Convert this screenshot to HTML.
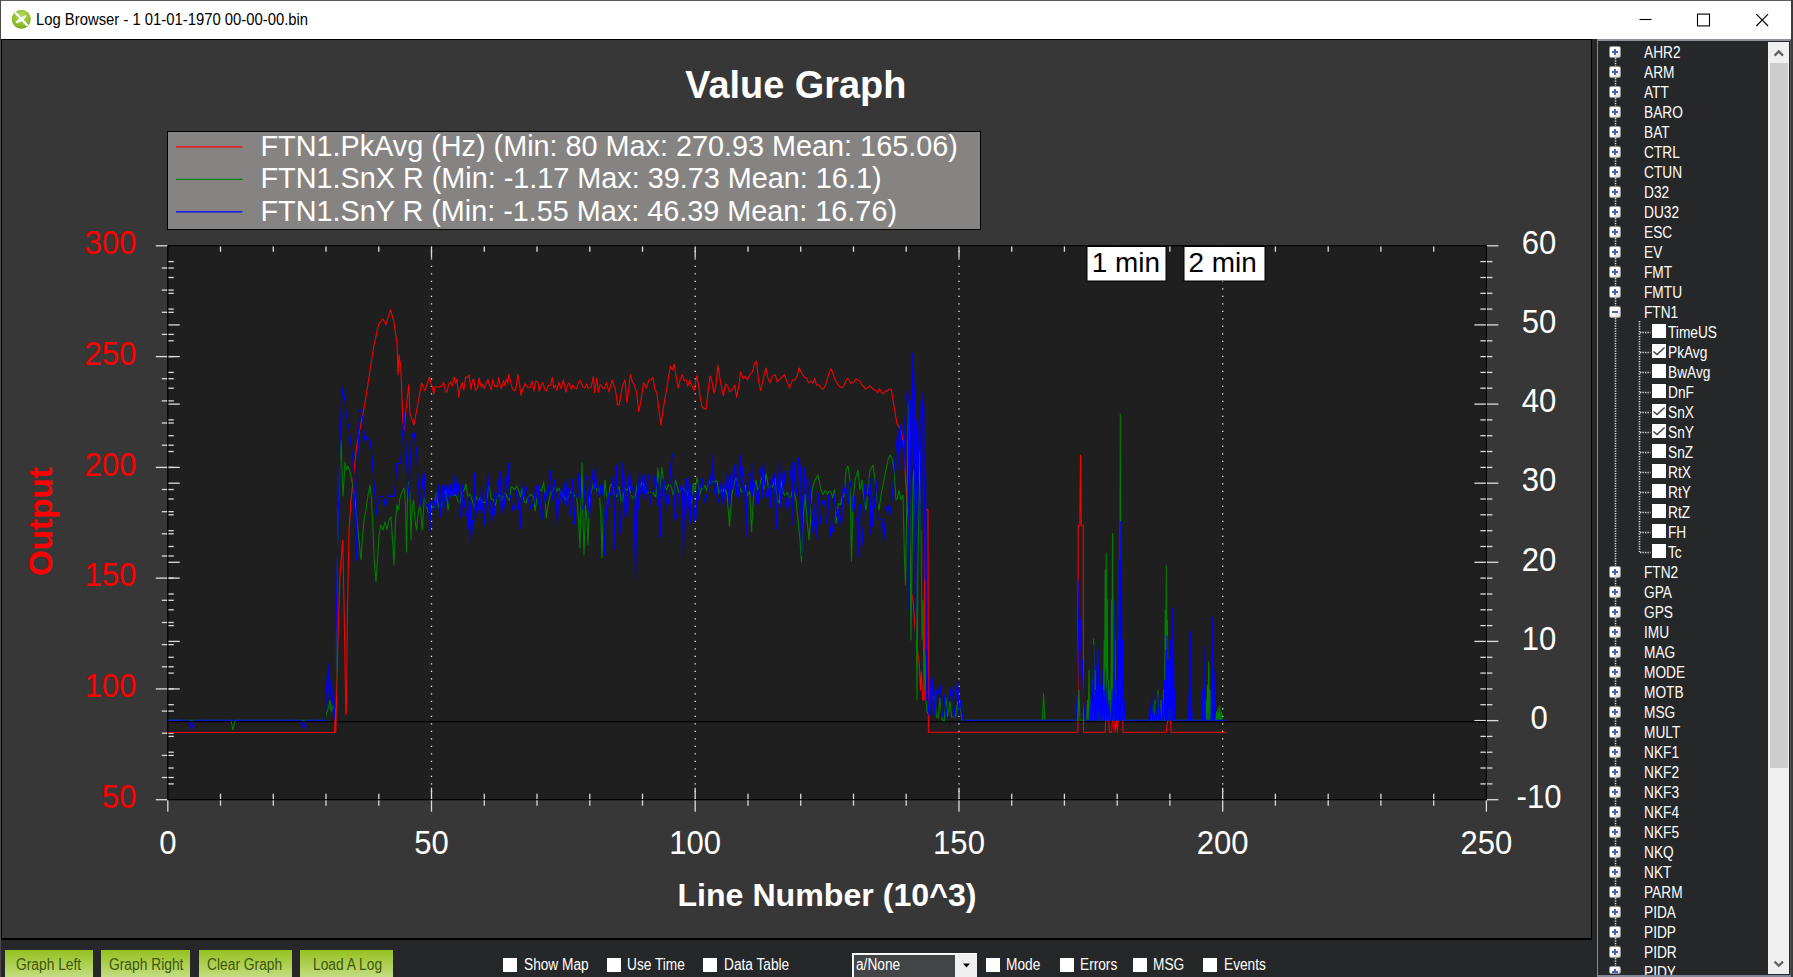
<!DOCTYPE html><html><head><meta charset="utf-8"><title>Log Browser</title><style>
html,body{margin:0;padding:0}
body{width:1793px;height:977px;overflow:hidden;background:#262728;position:relative;font-family:"Liberation Sans",Arial,sans-serif;}
.abs{position:absolute}
#titlebar{left:1px;top:1px;width:1790px;height:38px;background:#fff}
#title{left:36.3px;top:10.3px;font-size:16px;color:#000;white-space:pre;line-height:20px;transform:scaleX(.927);transform-origin:0 50%}
#frameTop{left:0;top:0;width:1793px;height:1px;background:#5a5a5a}
#frameL{left:0;top:0;width:1px;height:977px;background:#4a4a4a}
#frameR{left:1791px;top:0;width:2px;height:977px;background:#3c3c3c}
#paneBorder{left:1px;top:39px;width:1591px;height:900.5px;background:#000}
.ui{font-size:15.6px;white-space:pre;transform:scaleX(.878);transform-origin:0 50%;line-height:18px}
.btn{top:949.5px;height:30px;background:linear-gradient(#94c11f,#cde296 110%);color:#405704}
.btn span{position:absolute;top:6.4px;}
.cb{width:14px;height:14px;background:#fff}
.lbl{color:#fff}
#tree{left:1597px;top:39px;width:194px;height:937px;box-sizing:border-box;border:1px solid #828790;border-top:2px solid #8d9096;border-right-color:#555;background:#262728;overflow:hidden}
.pm{overflow:hidden;position:absolute;left:1609px;width:12px;height:12px;box-sizing:border-box;border:1px solid #959595;border-radius:2px;background:linear-gradient(135deg,#fff 40%,#d8d8d8)}
.pm i{position:absolute;left:2px;top:4px;width:6px;height:2px;background:#4b63a7}
.pm b{position:absolute;left:4px;top:2px;width:2px;height:6px;background:#4b63a7}
.tl{color:#fff}
</style></head><body>
<div class="abs" id="frameTop"></div><div class="abs" id="frameL"></div><div class="abs" id="frameR"></div>
<div class="abs" id="titlebar"></div>
<svg class="abs" style="left:11px;top:9px" width="21" height="21" viewBox="0 0 21 21"><defs><radialGradient id="ig" cx="50%" cy="30%" r="70%"><stop offset="0" stop-color="#b4d65c"/><stop offset=".75" stop-color="#8dbb2a"/><stop offset="1" stop-color="#78a51c"/></radialGradient></defs><circle cx="10.3" cy="10.2" r="9.5" fill="url(#ig)"/><path d="M14.9 5.9L15.5 7.4L11.6 11.9L5.7 14.6L4.3 13.1L9.1 8.7Z" fill="#fff" opacity=".88"/><path d="M4.7 4.1L16 15.9" stroke="#fff" stroke-width="2.2" stroke-linecap="round" fill="none"/><path d="M15.2 12.6L12.6 15.3" stroke="#fff" stroke-width="1.2" opacity=".8" fill="none"/></svg>
<div class="abs" id="title">Log Browser - 1 01-01-1970 00-00-00.bin</div>
<svg class="abs" style="left:1630px;top:1px" width="160" height="38" viewBox="1630 1 160 38"><g stroke="#000" stroke-width="1.1" fill="none"><path d="M1639.5 19.5H1651.5"/><rect x="1697.5" y="14.1" width="12" height="11.8"/><path d="M1756.3 14.2L1768.1 26M1768.1 14.2L1756.3 26"/></g></svg>
<div class="abs" id="paneBorder"></div>
<svg id="zg" width="1589" height="898" viewBox="2 40 1589 898" style="position:absolute;left:2px;top:40px">
<rect x="2" y="40" width="1589" height="898" fill="#373738"/>
<rect x="167.8" y="245.8" width="1318.6" height="553.9" fill="#1f1f20"/>
<g stroke="#f0f0f0" stroke-width="1.3" stroke-dasharray="1.25 6.25" stroke-dashoffset="-0.1" fill="none"><line x1="431.5" y1="799.7" x2="431.5" y2="245.8"/><line x1="695.2" y1="799.7" x2="695.2" y2="245.8"/><line x1="959.0" y1="799.7" x2="959.0" y2="245.8"/><line x1="1222.7" y1="799.7" x2="1222.7" y2="245.8"/></g>
<g stroke="#dcdcdc" stroke-width="1.3"><line x1="167.8" y1="799.7" x2="167.8" y2="811.7"/><line x1="220.5" y1="793.7" x2="220.5" y2="805.7"/><line x1="220.5" y1="245.8" x2="220.5" y2="251.8"/><line x1="273.3" y1="793.7" x2="273.3" y2="805.7"/><line x1="273.3" y1="245.8" x2="273.3" y2="251.8"/><line x1="326.0" y1="793.7" x2="326.0" y2="805.7"/><line x1="326.0" y1="245.8" x2="326.0" y2="251.8"/><line x1="378.8" y1="793.7" x2="378.8" y2="805.7"/><line x1="378.8" y1="245.8" x2="378.8" y2="251.8"/><line x1="431.5" y1="787.7" x2="431.5" y2="811.7"/><line x1="431.5" y1="245.8" x2="431.5" y2="257.8"/><line x1="484.3" y1="793.7" x2="484.3" y2="805.7"/><line x1="484.3" y1="245.8" x2="484.3" y2="251.8"/><line x1="537.0" y1="793.7" x2="537.0" y2="805.7"/><line x1="537.0" y1="245.8" x2="537.0" y2="251.8"/><line x1="589.8" y1="793.7" x2="589.8" y2="805.7"/><line x1="589.8" y1="245.8" x2="589.8" y2="251.8"/><line x1="642.5" y1="793.7" x2="642.5" y2="805.7"/><line x1="642.5" y1="245.8" x2="642.5" y2="251.8"/><line x1="695.2" y1="787.7" x2="695.2" y2="811.7"/><line x1="695.2" y1="245.8" x2="695.2" y2="257.8"/><line x1="748.0" y1="793.7" x2="748.0" y2="805.7"/><line x1="748.0" y1="245.8" x2="748.0" y2="251.8"/><line x1="800.7" y1="793.7" x2="800.7" y2="805.7"/><line x1="800.7" y1="245.8" x2="800.7" y2="251.8"/><line x1="853.5" y1="793.7" x2="853.5" y2="805.7"/><line x1="853.5" y1="245.8" x2="853.5" y2="251.8"/><line x1="906.2" y1="793.7" x2="906.2" y2="805.7"/><line x1="906.2" y1="245.8" x2="906.2" y2="251.8"/><line x1="959.0" y1="787.7" x2="959.0" y2="811.7"/><line x1="959.0" y1="245.8" x2="959.0" y2="257.8"/><line x1="1011.7" y1="793.7" x2="1011.7" y2="805.7"/><line x1="1011.7" y1="245.8" x2="1011.7" y2="251.8"/><line x1="1064.4" y1="793.7" x2="1064.4" y2="805.7"/><line x1="1064.4" y1="245.8" x2="1064.4" y2="251.8"/><line x1="1117.2" y1="793.7" x2="1117.2" y2="805.7"/><line x1="1117.2" y1="245.8" x2="1117.2" y2="251.8"/><line x1="1169.9" y1="793.7" x2="1169.9" y2="805.7"/><line x1="1169.9" y1="245.8" x2="1169.9" y2="251.8"/><line x1="1222.7" y1="787.7" x2="1222.7" y2="811.7"/><line x1="1222.7" y1="245.8" x2="1222.7" y2="257.8"/><line x1="1275.4" y1="793.7" x2="1275.4" y2="805.7"/><line x1="1275.4" y1="245.8" x2="1275.4" y2="251.8"/><line x1="1328.2" y1="793.7" x2="1328.2" y2="805.7"/><line x1="1328.2" y1="245.8" x2="1328.2" y2="251.8"/><line x1="1380.9" y1="793.7" x2="1380.9" y2="805.7"/><line x1="1380.9" y1="245.8" x2="1380.9" y2="251.8"/><line x1="1433.7" y1="793.7" x2="1433.7" y2="805.7"/><line x1="1433.7" y1="245.8" x2="1433.7" y2="251.8"/><line x1="1486.4" y1="799.7" x2="1486.4" y2="811.7"/><line x1="155.8" y1="799.7" x2="167.8" y2="799.7"/><line x1="161.8" y1="777.5" x2="173.8" y2="777.5"/><line x1="161.8" y1="755.4" x2="173.8" y2="755.4"/><line x1="161.8" y1="733.2" x2="173.8" y2="733.2"/><line x1="161.8" y1="711.1" x2="173.8" y2="711.1"/><line x1="155.8" y1="688.9" x2="179.8" y2="688.9"/><line x1="161.8" y1="666.8" x2="173.8" y2="666.8"/><line x1="161.8" y1="644.6" x2="173.8" y2="644.6"/><line x1="161.8" y1="622.5" x2="173.8" y2="622.5"/><line x1="161.8" y1="600.3" x2="173.8" y2="600.3"/><line x1="155.8" y1="578.1" x2="179.8" y2="578.1"/><line x1="161.8" y1="556.0" x2="173.8" y2="556.0"/><line x1="161.8" y1="533.8" x2="173.8" y2="533.8"/><line x1="161.8" y1="511.7" x2="173.8" y2="511.7"/><line x1="161.8" y1="489.5" x2="173.8" y2="489.5"/><line x1="155.8" y1="467.4" x2="179.8" y2="467.4"/><line x1="161.8" y1="445.2" x2="173.8" y2="445.2"/><line x1="161.8" y1="423.0" x2="173.8" y2="423.0"/><line x1="161.8" y1="400.9" x2="173.8" y2="400.9"/><line x1="161.8" y1="378.7" x2="173.8" y2="378.7"/><line x1="155.8" y1="356.6" x2="179.8" y2="356.6"/><line x1="161.8" y1="334.4" x2="173.8" y2="334.4"/><line x1="161.8" y1="312.3" x2="173.8" y2="312.3"/><line x1="161.8" y1="290.1" x2="173.8" y2="290.1"/><line x1="161.8" y1="268.0" x2="173.8" y2="268.0"/><line x1="155.8" y1="245.8" x2="167.8" y2="245.8"/><line x1="1486.4" y1="799.7" x2="1498.4" y2="799.7"/><line x1="1480.4" y1="783.9" x2="1492.4" y2="783.9"/><line x1="167.8" y1="783.9" x2="173.8" y2="783.9"/><line x1="1480.4" y1="768.0" x2="1492.4" y2="768.0"/><line x1="167.8" y1="768.0" x2="173.8" y2="768.0"/><line x1="1480.4" y1="752.2" x2="1492.4" y2="752.2"/><line x1="167.8" y1="752.2" x2="173.8" y2="752.2"/><line x1="1480.4" y1="736.4" x2="1492.4" y2="736.4"/><line x1="167.8" y1="736.4" x2="173.8" y2="736.4"/><line x1="1474.4" y1="720.6" x2="1498.4" y2="720.6"/><line x1="167.8" y1="720.6" x2="179.8" y2="720.6"/><line x1="1480.4" y1="704.7" x2="1492.4" y2="704.7"/><line x1="167.8" y1="704.7" x2="173.8" y2="704.7"/><line x1="1480.4" y1="688.9" x2="1492.4" y2="688.9"/><line x1="167.8" y1="688.9" x2="173.8" y2="688.9"/><line x1="1480.4" y1="673.1" x2="1492.4" y2="673.1"/><line x1="167.8" y1="673.1" x2="173.8" y2="673.1"/><line x1="1480.4" y1="657.3" x2="1492.4" y2="657.3"/><line x1="167.8" y1="657.3" x2="173.8" y2="657.3"/><line x1="1474.4" y1="641.4" x2="1498.4" y2="641.4"/><line x1="167.8" y1="641.4" x2="179.8" y2="641.4"/><line x1="1480.4" y1="625.6" x2="1492.4" y2="625.6"/><line x1="167.8" y1="625.6" x2="173.8" y2="625.6"/><line x1="1480.4" y1="609.8" x2="1492.4" y2="609.8"/><line x1="167.8" y1="609.8" x2="173.8" y2="609.8"/><line x1="1480.4" y1="594.0" x2="1492.4" y2="594.0"/><line x1="167.8" y1="594.0" x2="173.8" y2="594.0"/><line x1="1480.4" y1="578.1" x2="1492.4" y2="578.1"/><line x1="167.8" y1="578.1" x2="173.8" y2="578.1"/><line x1="1474.4" y1="562.3" x2="1498.4" y2="562.3"/><line x1="167.8" y1="562.3" x2="179.8" y2="562.3"/><line x1="1480.4" y1="546.5" x2="1492.4" y2="546.5"/><line x1="167.8" y1="546.5" x2="173.8" y2="546.5"/><line x1="1480.4" y1="530.7" x2="1492.4" y2="530.7"/><line x1="167.8" y1="530.7" x2="173.8" y2="530.7"/><line x1="1480.4" y1="514.8" x2="1492.4" y2="514.8"/><line x1="167.8" y1="514.8" x2="173.8" y2="514.8"/><line x1="1480.4" y1="499.0" x2="1492.4" y2="499.0"/><line x1="167.8" y1="499.0" x2="173.8" y2="499.0"/><line x1="1474.4" y1="483.2" x2="1498.4" y2="483.2"/><line x1="167.8" y1="483.2" x2="179.8" y2="483.2"/><line x1="1480.4" y1="467.4" x2="1492.4" y2="467.4"/><line x1="167.8" y1="467.4" x2="173.8" y2="467.4"/><line x1="1480.4" y1="451.5" x2="1492.4" y2="451.5"/><line x1="167.8" y1="451.5" x2="173.8" y2="451.5"/><line x1="1480.4" y1="435.7" x2="1492.4" y2="435.7"/><line x1="167.8" y1="435.7" x2="173.8" y2="435.7"/><line x1="1480.4" y1="419.9" x2="1492.4" y2="419.9"/><line x1="167.8" y1="419.9" x2="173.8" y2="419.9"/><line x1="1474.4" y1="404.1" x2="1498.4" y2="404.1"/><line x1="167.8" y1="404.1" x2="179.8" y2="404.1"/><line x1="1480.4" y1="388.2" x2="1492.4" y2="388.2"/><line x1="167.8" y1="388.2" x2="173.8" y2="388.2"/><line x1="1480.4" y1="372.4" x2="1492.4" y2="372.4"/><line x1="167.8" y1="372.4" x2="173.8" y2="372.4"/><line x1="1480.4" y1="356.6" x2="1492.4" y2="356.6"/><line x1="167.8" y1="356.6" x2="173.8" y2="356.6"/><line x1="1480.4" y1="340.8" x2="1492.4" y2="340.8"/><line x1="167.8" y1="340.8" x2="173.8" y2="340.8"/><line x1="1474.4" y1="324.9" x2="1498.4" y2="324.9"/><line x1="167.8" y1="324.9" x2="179.8" y2="324.9"/><line x1="1480.4" y1="309.1" x2="1492.4" y2="309.1"/><line x1="167.8" y1="309.1" x2="173.8" y2="309.1"/><line x1="1480.4" y1="293.3" x2="1492.4" y2="293.3"/><line x1="167.8" y1="293.3" x2="173.8" y2="293.3"/><line x1="1480.4" y1="277.5" x2="1492.4" y2="277.5"/><line x1="167.8" y1="277.5" x2="173.8" y2="277.5"/><line x1="1480.4" y1="261.6" x2="1492.4" y2="261.6"/><line x1="167.8" y1="261.6" x2="173.8" y2="261.6"/><line x1="1486.4" y1="245.8" x2="1498.4" y2="245.8"/></g>
<rect x="167.8" y="245.8" width="1318.6" height="553.9" fill="none" stroke="#000" stroke-width="1.2"/>
<line x1="167.8" y1="721.6" x2="1486.4" y2="721.6" stroke="#000" stroke-width="1.2"/>
<clipPath id="cp"><rect x="167.8" y="245.8" width="1318.6" height="553.9"/></clipPath>
<g clip-path="url(#cp)">
<polyline points="167.8,732.5 334.6,732.5 335.2,708.0 335.8,732.5 337.0,680.0 338.5,620.0 340.0,575.0 342.6,540.0 344.0,600.0 345.8,714.0 346.3,714.0 347.5,610.0 349.0,530.0 351.0,500.0 356.5,447.0 365.0,403.0 373.7,346.5 378.6,324.4 382.8,319.0 386.0,324.4 390.4,309.6 394.0,322.0 397.0,344.0 398.0,374.7 399.0,355.0 400.7,366.0 403.0,422.6 404.4,430.0 406.0,410.0 408.8,384.5 409.8,412.8 414.0,425.0 421.6,383.0 425.0,390.7 429.4,377.0 431.0,384.0 432.3,387.0 433.8,393.9 435.1,386.7 437.1,387.0 439.3,387.0 440.9,386.2 442.4,384.8 443.7,382.4 445.5,391.9 447.0,391.7 448.7,384.6 450.5,381.8 452.4,386.0 454.1,376.9 455.6,383.7 456.9,379.1 458.6,396.9 460.4,387.5 462.2,382.6 463.8,390.2 465.7,376.9 467.6,377.4 469.1,374.9 471.0,389.4 472.3,380.9 473.7,378.7 475.4,390.1 477.5,388.4 479.1,377.8 481.2,387.2 482.6,384.4 484.3,388.6 486.0,383.3 487.9,379.5 489.2,384.5 491.2,390.0 492.8,379.9 494.6,386.4 496.0,385.6 497.2,387.3 498.8,377.3 500.1,384.9 501.4,388.7 503.6,380.5 504.9,386.0 506.4,379.0 507.7,382.9 508.9,374.1 510.8,383.1 512.4,388.4 514.4,391.0 515.8,389.4 517.8,374.3 519.8,385.7 521.0,395.3 522.9,389.2 525.1,383.8 526.6,385.5 528.0,387.8 530.1,387.5 532.1,381.1 534.0,390.9 535.7,381.2 537.7,381.4 539.3,391.2 541.4,384.6 542.8,382.6 544.8,389.5 546.6,390.9 548.4,385.5 550.3,385.5 552.4,377.6 553.8,388.3 555.3,385.3 556.9,390.3 559.0,382.3 561.1,388.5 563.3,380.1 564.5,384.9 565.8,392.2 567.5,385.2 569.3,382.8 571.3,389.3 573.0,385.0 574.7,388.2 576.7,388.7 578.4,382.7 580.3,380.3 582.5,386.5 584.5,387.9 586.7,383.9 588.0,388.1 589.5,388.0 591.3,386.8 593.3,376.7 594.6,392.8 596.7,378.0 598.4,392.5 600.1,384.5 601.6,386.2 602.8,388.3 604.4,388.6 606.3,382.6 609.0,391.9 612.2,379.9 613.9,385.5 615.6,390.6 617.4,404.6 619.1,405.2 622.3,386.6 625.0,379.9 626.8,402.5 628.5,391.4 630.3,374.6 632.3,381.5 634.3,385.2 636.5,392.1 638.8,411.9 641.2,398.8 643.6,382.6 646.2,387.9 648.9,379.9 650.9,379.8 652.9,377.3 654.9,389.5 656.9,393.2 658.9,410.3 660.9,425.2 662.9,411.7 664.9,398.6 666.9,387.9 668.9,374.6 670.6,366.2 672.4,370.1 674.2,364.0 676.2,376.7 678.2,387.9 680.2,379.5 682.2,374.6 684.2,380.6 686.2,379.9 687.9,386.2 689.7,380.0 691.5,385.2 694.2,390.6 696.7,375.9 698.4,384.5 700.2,397.1 702.0,406.5 704.0,408.3 706.0,409.2 708.0,391.6 710.0,375.9 712.0,382.1 714.0,393.2 716.0,384.6 717.9,365.3 720.6,382.6 723.3,395.9 725.4,383.9 727.3,385.2 729.9,391.9 732.6,389.2 734.7,385.2 736.6,397.2 738.6,387.2 740.6,371.9 743.2,378.6 745.2,376.3 747.2,379.9 749.9,374.6 752.5,371.9 754.5,363.3 756.5,361.3 758.5,380.2 760.5,390.6 763.2,379.9 765.9,367.9 767.9,377.7 769.9,382.6 772.5,375.9 775.2,374.6 777.2,381.8 779.2,379.9 781.8,377.3 784.5,374.6 787.2,382.6 789.8,387.9 792.5,379.9 795.1,379.9 797.1,376.0 799.1,367.9 801.8,373.3 804.5,377.3 806.4,377.7 808.4,382.6 811.1,381.3 812.9,383.2 814.7,378.5 816.4,385.2 818.6,384.7 820.9,387.8 823.1,389.2 825.1,385.9 827.1,379.9 829.1,372.5 831.1,368.7 833.1,374.0 835.1,379.9 837.3,383.7 839.5,386.2 841.7,387.9 843.5,386.4 845.3,382.2 847.0,378.6 848.8,379.1 850.6,383.2 852.4,382.6 854.1,381.8 855.9,378.7 857.7,379.9 859.7,380.7 861.7,384.6 863.7,386.6 865.7,389.2 867.7,387.9 869.7,385.8 871.7,387.4 873.7,389.5 875.7,390.4 877.6,392.4 879.6,388.8 881.6,392.6 883.6,393.7 885.6,390.6 887.4,391.2 889.2,389.2 891.0,389.2 891.3,389.7 896.9,423.5 900.7,429.0 902.5,438.0 903.6,442.6 905.2,474.0 907.0,503.0 909.0,530.0 910.5,559.0 910.8,590.0 913.0,600.0 915.0,628.0 917.5,651.0 919.3,664.5 920.5,690.0 921.3,672.0 922.8,700.0 924.3,700.0 924.6,509.6 928.0,509.6 928.4,732.3 1077.9,732.3 1078.2,525.3 1079.8,525.3 1080.5,455.3 1081.2,525.3 1083.2,525.3 1083.5,732.3 1105.3,732.3 1105.6,720.6 1108.8,720.6 1109.2,732.3 1111.8,732.3 1112.3,720.6 1114.0,720.6 1115.0,732.3 1116.3,720.6 1117.5,732.3 1118.0,720.6 1119.8,720.6 1120.3,617.0 1121.0,617.0 1121.4,700.0 1122.7,700.0 1123.0,732.3 1166.3,732.3 1167.5,720.6 1170.5,720.6 1171.0,732.3 1226.4,732.3" fill="none" stroke="#ff0000" stroke-width="1.05" stroke-linejoin="round"/>
<polyline points="167.8,720.3 231.0,720.3 233.0,730.0 235.0,720.3 325.0,720.3 327.0,712.0 329.0,706.0 330.0,700.0 331.0,712.0 332.5,705.0 334.0,716.0 335.5,700.0 336.8,600.0 338.0,520.0 339.5,470.0 341.0,440.0 342.0,470.0 343.0,496.0 344.0,480.0 345.0,462.0 346.5,470.0 348.0,466.0 350.0,472.0 352.0,482.0 355.0,499.0 357.0,520.0 359.0,540.0 361.0,560.0 362.0,545.0 364.0,520.0 366.0,510.0 368.0,495.0 370.0,485.0 371.5,500.0 373.0,530.0 374.5,565.0 376.0,582.0 377.5,560.0 379.0,535.0 381.0,525.0 383.0,530.0 385.0,522.0 387.0,530.0 389.0,520.0 391.0,517.0 392.5,540.0 394.0,565.0 395.5,520.0 397.0,505.0 398.5,510.0 400.0,498.0 402.0,492.0 404.0,488.0 405.5,505.0 406.5,552.0 407.5,500.0 408.5,481.5 410.0,495.0 411.0,540.0 412.0,510.0 413.5,500.0 415.0,520.0 416.5,530.0 418.0,515.0 420.0,504.0 422.3,530.2 424.3,497.8 426.1,503.2 427.7,511.9 429.8,513.0 431.9,506.4 434.1,507.7 436.3,492.3 438.5,507.0 440.5,507.6 442.6,502.0 444.3,500.0 445.9,490.5 448.1,510.1 449.6,497.8 451.8,493.4 454.2,495.4 456.2,494.9 457.9,500.9 460.0,503.7 461.7,491.8 464.0,490.3 465.9,483.8 467.8,496.2 470.1,494.4 472.0,499.7 474.3,507.9 475.9,496.7 478.3,501.0 480.5,497.1 482.5,502.8 484.0,502.5 486.5,501.9 488.8,485.1 491.2,499.2 493.4,499.6 495.4,505.4 497.4,496.8 499.9,495.1 501.5,500.5 503.9,493.3 506.0,494.1 507.6,498.2 509.4,500.5 511.0,486.8 513.0,487.7 514.7,489.8 516.9,485.9 518.7,490.6 520.6,497.0 522.1,488.7 524.1,501.3 525.9,503.0 527.6,498.4 529.9,494.4 531.9,495.1 533.5,497.1 535.1,510.8 537.0,498.6 539.3,488.8 541.6,490.9 543.8,482.1 546.3,517.8 548.3,503.7 550.8,492.9 553.2,490.3 555.1,485.3 556.8,491.2 558.9,488.1 561.3,494.0 563.2,495.5 565.3,498.9 566.9,500.5 569.2,494.0 570.9,492.1 573.0,492.9 577.0,500.0 578.5,520.0 580.0,548.0 581.0,500.0 582.0,463.0 583.0,520.0 584.0,555.0 585.5,505.0 587.0,520.0 588.0,545.0 589.5,500.0 591.0,493.2 593.0,485.1 595.2,484.1 597.1,491.6 599.2,489.0 601.0,520.0 602.0,558.0 603.5,500.0 605.0,480.0 606.0,491.1 608.1,504.3 610.0,485.6 612.5,483.8 614.2,494.6 616.7,496.8 619.1,486.6 621.4,503.3 623.0,496.3 625.0,489.2 627.2,489.9 629.0,487.3 631.3,495.1 633.5,498.8 635.6,494.9 637.3,484.0 639.4,487.4 641.9,482.6 643.6,483.3 645.2,490.3 647.5,492.8 649.8,492.5 651.6,491.8 653.5,493.6 655.9,496.6 657.8,468.1 659.8,490.5 661.8,467.2 664.1,484.5 666.5,489.5 669.0,484.2 671.4,487.2 673.2,495.2 675.5,480.1 677.2,486.0 678.9,493.3 680.5,490.3 682.4,487.7 684.7,489.9 686.5,491.6 688.0,495.6 689.8,498.4 691.6,502.7 693.2,483.5 694.9,490.8 697.1,477.3 699.6,495.2 701.3,488.5 703.1,489.6 705.1,485.6 706.9,490.9 708.5,481.1 710.8,484.0 712.9,480.7 714.5,482.1 716.9,480.7 718.9,493.7 720.9,490.1 722.6,491.6 724.9,488.3 727.1,495.0 729.5,526.2 731.7,495.6 733.6,485.9 735.9,477.7 738.0,484.1 740.3,488.9 741.8,492.2 743.6,490.8 745.2,485.4 747.5,495.5 749.7,491.2 751.6,531.9 753.8,491.4 756.0,480.3 757.6,490.3 759.8,484.0 762.0,476.5 763.8,488.9 766.2,473.9 768.5,487.9 770.6,485.4 772.5,487.0 775.0,478.9 777.3,499.8 779.3,503.3 781.1,481.2 783.0,492.3 785.2,495.6 786.9,492.0 789.4,498.2 791.1,495.8 793.0,489.2 796.0,500.0 798.0,520.0 800.0,540.0 801.5,562.0 803.0,520.0 805.0,495.0 807.0,520.0 809.0,540.0 810.5,520.0 812.0,490.0 815.0,480.0 818.0,475.0 821.0,490.0 823.0,494.5 825.1,490.2 827.4,494.0 829.2,491.2 830.8,491.9 832.7,497.7 834.6,489.7 836.1,523.2 838.4,503.5 840.4,504.6 842.4,495.5 843.9,496.9 846.0,470.0 848.0,466.0 850.0,480.0 851.5,561.0 853.0,500.0 855.0,480.0 858.0,470.0 860.0,490.0 862.0,480.0 864.0,500.0 866.0,510.0 868.0,490.0 870.0,470.0 873.0,465.0 875.0,480.0 877.0,500.0 879.0,510.0 881.0,495.0 884.0,480.0 886.0,470.0 888.0,460.0 890.0,455.0 892.0,458.0 894.0,470.0 896.0,500.0 897.5,498.0 899.0,490.0 901.0,500.0 903.0,495.0 904.5,560.0 905.5,585.0 906.5,520.0 907.5,470.0 908.3,405.0 909.2,440.0 910.0,520.0 911.0,640.0 912.0,560.0 913.0,480.0 914.0,470.0 915.0,520.0 916.0,600.0 917.0,700.0 918.0,560.0 919.0,500.0 920.0,450.0 921.0,520.0 922.0,640.0 923.0,600.0 924.0,690.0 925.0,650.0 926.0,700.0 927.0,712.0 928.0,713.7 929.6,704.5 931.8,697.9 934.2,695.8 936.4,716.4 938.1,718.1 940.0,698.1 942.1,719.8 944.2,721.0 946.1,697.8 947.5,716.5 950.0,701.3 951.5,717.0 953.8,716.9 955.7,716.4 957.5,702.3 959.7,701.8 962.0,720.3 1042.4,720.3 1043.6,693.7 1044.8,720.3 1078.0,720.3 1079.0,690.0 1080.0,720.3 1086.8,720.3 1087.5,700.0 1088.2,720.3 1088.3,720.3 1089.0,670.0 1089.7,720.3 1089.8,720.3 1090.5,700.0 1091.2,720.3 1091.6,720.3 1092.3,680.0 1093.0,720.3 1093.0,720.3 1093.7,638.8 1094.4,720.3 1094.3,720.3 1095.0,670.0 1095.7,720.3 1095.8,720.3 1096.5,700.0 1097.2,720.3 1098.3,720.3 1099.0,690.0 1099.7,720.3 1100.8,720.3 1101.5,700.0 1102.2,720.3 1103.5,720.3 1104.2,640.0 1104.9,720.3 1104.5,720.3 1105.2,570.0 1105.9,720.3 1105.6,720.3 1106.3,553.0 1107.0,720.3 1106.6,720.3 1107.3,600.0 1108.0,720.3 1107.8,720.3 1108.5,680.0 1109.2,720.3 1109.3,720.3 1110.0,690.0 1110.7,720.3 1110.7,720.3 1111.4,600.0 1112.1,720.3 1111.8,720.3 1112.5,533.4 1113.2,720.3 1112.9,720.3 1113.6,600.0 1114.3,720.3 1114.3,720.3 1115.0,640.0 1115.7,720.3 1115.8,720.3 1116.5,690.0 1117.2,720.3 1117.3,720.3 1118.0,680.0 1118.7,720.3 1118.6,720.3 1119.3,560.0 1120.0,720.3 1119.6,720.3 1120.3,414.0 1121.0,720.3 1120.5,720.3 1121.2,560.0 1121.9,720.3 1121.8,720.3 1122.5,690.0 1123.2,720.3 1124.0,720.3 1150.0,720.3 1151.3,720.3 1152.0,706.0 1152.7,720.3 1154.3,720.3 1155.0,700.0 1155.7,720.3 1157.3,720.3 1158.0,690.0 1158.7,720.3 1160.3,720.3 1161.0,700.0 1161.7,720.3 1162.8,720.3 1163.5,690.0 1164.2,720.3 1164.5,720.3 1165.2,610.0 1165.9,720.3 1165.6,720.3 1166.3,565.8 1167.0,720.3 1166.7,720.3 1167.4,620.0 1168.1,720.3 1168.3,720.3 1169.0,690.0 1169.7,720.3 1170.8,720.3 1171.5,700.0 1172.2,720.3 1174.0,720.3 1204.0,720.3 1205.3,720.3 1206.0,700.0 1206.7,720.3 1206.8,720.3 1207.5,685.0 1208.2,720.3 1208.0,720.3 1208.7,662.0 1209.4,720.3 1209.3,720.3 1210.0,690.0 1210.7,720.3 1215.8,720.3 1216.5,712.0 1217.2,720.3 1217.3,720.3 1218.0,708.0 1218.7,720.3 1219.1,720.3 1219.8,705.8 1220.5,720.3 1220.8,720.3 1221.5,712.0 1222.2,720.3 1224.0,720.3 1226.4,720.3" fill="none" stroke="#008000" stroke-width="1.05" stroke-linejoin="round"/>
<polyline points="167.8,720.3 189.6,720.3 191.6,730.0 193.6,720.3 301.7,720.3 303.7,730.0 305.7,720.3 325.3,720.3 326.5,690.0 328.0,663.7 329.0,690.0 330.0,700.0 331.0,680.0 332.0,695.0 333.0,705.0 334.0,720.0 335.2,700.0 336.0,640.0 337.0,570.0 338.0,530.0 339.0,480.0 340.5,425.0 341.5,400.0 343.0,387.0 344.0,395.0 345.4,405.0 347.0,420.0 349.0,427.5 351.0,445.0 352.8,457.0 354.5,500.0 356.5,560.0 357.3,470.0 359.7,408.0 361.0,412.0 362.6,417.7 363.8,430.0 365.0,442.0 367.0,437.0 370.0,440.0 371.3,450.0 372.4,462.0 374.5,490.0 376.6,514.7 377.8,505.0 379.0,498.7 381.0,496.0 383.5,497.0 385.2,507.0 387.0,499.0 388.5,495.0 391.0,497.0 394.5,496.0 395.7,480.0 397.0,463.0 399.0,464.0 400.7,463.0 402.0,440.0 403.3,425.0 404.4,412.8 405.6,440.0 407.0,470.0 408.0,485.0 409.0,498.7 410.0,470.0 411.7,433.7 413.0,437.0 414.2,432.5 415.4,445.0 416.6,449.6 417.8,475.0 419.0,491.0 420.0,507.0 421.2,492.4 422.2,487.4 423.3,475.4 424.4,473.5 425.2,503.4 426.1,504.5 427.3,506.3 428.1,503.2 429.0,511.2 429.9,531.4 430.7,502.2 431.6,501.3 432.6,501.7 433.5,500.3 434.3,501.0 435.0,510.6 436.1,504.9 437.2,492.4 438.1,484.1 439.4,507.3 440.2,517.0 441.4,492.3 442.2,485.7 443.2,507.3 444.2,485.1 445.3,512.3 446.2,491.5 447.4,483.7 448.5,490.7 449.3,503.5 450.3,483.6 451.1,495.5 451.9,490.7 452.8,496.0 453.7,473.9 454.8,494.1 455.6,483.3 456.5,495.5 457.2,476.3 458.3,491.5 459.3,482.3 460.3,512.9 461.6,519.1 462.3,484.7 463.3,501.3 464.1,507.4 465.0,499.1 466.2,513.4 467.4,518.3 468.3,529.6 469.3,495.6 470.2,505.0 471.3,542.5 472.5,520.2 473.7,521.9 474.6,473.0 475.6,518.1 476.4,508.8 477.3,503.1 478.2,498.8 479.2,512.2 480.3,508.2 481.6,486.7 482.7,513.0 483.8,507.9 484.7,525.3 485.7,513.1 486.6,500.2 487.7,472.2 488.7,485.8 489.5,499.5 490.5,503.2 491.5,523.4 492.4,513.2 493.2,507.5 494.3,514.7 495.2,490.3 496.2,494.1 497.4,500.5 498.4,483.4 499.3,478.2 500.2,471.5 501.4,515.2 502.5,508.2 503.3,492.7 504.5,506.5 505.4,480.4 506.2,476.7 507.3,490.0 508.4,462.7 509.3,497.4 510.4,495.5 511.4,502.4 512.2,510.9 513.2,506.5 514.2,509.0 515.5,500.8 516.7,490.0 517.9,496.6 518.8,509.9 519.8,502.0 520.8,528.8 521.8,495.4 522.6,501.8 523.5,480.6 524.4,496.2 525.5,489.3 526.8,487.6 527.7,494.5 528.9,502.8 530.2,506.9 531.0,509.4 532.1,503.7 533.4,507.2 534.6,494.8 535.4,490.3 536.3,485.4 537.0,491.5 537.9,505.1 538.7,485.5 539.7,493.9 540.6,505.7 541.8,520.1 543.0,512.5 544.2,492.6 545.3,503.1 546.5,491.5 547.4,492.6 548.2,485.3 549.4,496.0 550.4,470.5 551.6,482.8 552.6,497.7 553.4,501.8 554.6,479.6 555.5,486.9 556.3,502.7 557.4,525.9 558.3,499.6 559.5,504.9 560.3,496.8 561.4,487.7 562.5,495.8 563.6,504.5 564.8,483.8 565.8,479.3 566.7,504.0 567.5,508.0 568.4,488.3 569.4,495.5 570.7,515.0 571.7,508.7 572.4,478.8 573.3,501.7 574.5,524.1 575.7,493.7 576.9,497.0 577.9,489.4 578.0,486.0 578.9,473.3 579.6,475.2 580.7,494.1 581.9,505.8 582.7,508.9 583.7,506.4 584.6,491.2 585.5,477.7 586.4,476.0 587.5,483.0 588.5,498.7 589.2,518.2 590.2,506.1 591.2,482.0 591.9,469.3 592.7,480.0 593.7,481.0 594.7,489.7 595.5,464.2 596.3,487.4 597.5,488.0 598.5,494.2 599.5,497.3 600.4,485.7 601.6,495.7 602.5,484.8 603.5,499.1 604.7,555.5 605.8,523.8 606.9,507.4 607.9,490.7 608.9,507.2 609.9,493.1 610.8,493.9 612.0,496.0 613.0,476.5 613.8,482.2 614.8,549.5 615.6,489.6 616.4,464.9 617.3,493.4 618.5,490.0 619.7,506.8 620.9,533.8 621.8,497.7 622.9,462.3 624.1,480.2 625.1,517.2 625.9,496.8 626.7,511.5 627.5,518.4 628.4,489.5 629.2,469.7 630.4,482.1 631.4,494.8 632.5,487.7 633.6,486.4 634.6,533.4 635.5,580.5 636.4,520.3 637.6,479.2 638.4,509.2 639.4,471.0 640.3,494.1 641.3,493.3 642.1,492.1 643.0,473.8 644.1,476.7 644.9,498.4 645.7,488.7 646.9,493.9 647.6,476.6 648.7,474.5 649.9,505.1 650.8,498.6 651.7,490.4 652.5,491.5 653.7,488.8 654.6,476.2 655.7,475.8 656.6,485.8 657.8,494.4 658.5,506.2 659.6,473.6 660.5,537.3 661.6,499.0 662.8,490.0 663.8,478.8 664.8,485.7 665.6,511.6 666.4,495.3 667.6,503.2 668.5,503.9 669.7,484.6 670.8,467.3 672.0,453.8 673.2,456.9 674.1,491.7 675.1,520.9 675.9,514.1 677.1,518.7 678.2,497.8 679.3,491.8 680.2,485.0 681.4,493.5 682.6,487.5 683.4,559.0 684.6,497.9 685.7,483.5 686.5,479.1 687.4,518.4 688.3,502.5 689.2,476.0 690.4,522.6 691.1,484.0 692.1,497.2 693.1,498.2 694.2,522.2 695.0,505.8 695.8,519.0 696.7,500.0 697.7,482.9 698.6,500.0 699.7,488.0 700.5,485.2 701.6,483.8 702.6,478.6 703.8,499.3 705.0,502.4 706.2,494.5 707.1,499.2 708.2,484.4 709.3,479.5 710.1,475.6 711.2,485.5 712.3,479.0 713.1,455.5 714.0,488.5 715.1,494.1 716.0,483.0 717.0,495.1 718.2,502.4 719.0,499.5 720.3,490.1 721.4,480.0 722.2,490.9 723.1,504.8 724.2,496.3 725.3,482.5 726.2,489.3 727.4,470.7 728.4,493.0 729.5,509.4 730.7,475.7 731.8,472.7 732.6,488.6 733.7,483.7 734.7,466.2 735.7,463.5 736.6,494.9 737.7,476.5 738.5,497.2 739.3,498.1 740.1,454.9 741.1,476.3 742.3,467.3 743.2,493.3 744.2,486.3 745.0,489.1 746.0,536.4 746.9,484.3 747.8,473.7 749.0,473.9 749.9,482.9 750.8,491.6 751.7,461.3 752.6,495.6 753.8,486.8 754.7,482.4 755.9,505.5 757.1,490.8 758.1,503.7 758.8,489.7 759.7,476.0 760.7,470.2 761.9,466.3 762.7,498.5 763.5,461.0 764.6,483.7 765.6,487.2 766.4,495.0 767.4,498.7 768.6,493.2 769.6,480.4 770.7,507.7 771.5,476.2 772.6,484.4 773.6,470.7 774.5,479.9 775.3,504.0 776.3,529.3 777.3,474.2 778.3,492.9 779.6,459.2 780.6,506.4 781.9,496.7 783.1,472.7 783.9,483.4 784.9,470.9 785.9,510.3 787.0,498.0 788.1,507.0 789.0,500.6 789.9,477.7 791.1,470.4 792.0,461.4 793.0,525.0 794.2,462.2 795.0,481.5 796.2,488.6 797.3,497.0 798.4,457.9 799.5,461.8 800.5,468.7 801.7,555.4 802.9,495.4 803.8,502.5 804.7,467.9 805.7,476.8 806.9,484.0 807.6,512.7 808.9,514.1 809.6,479.5 810.8,500.2 811.8,509.7 812.6,532.8 813.7,522.8 814.9,525.5 815.0,503.4 815.9,539.4 817.0,514.5 818.2,492.7 819.2,510.2 820.4,523.2 821.5,506.6 822.7,501.3 823.9,500.2 825.0,504.4 826.1,517.8 827.3,524.9 828.3,494.9 829.5,516.2 830.4,536.6 831.6,525.1 832.7,532.1 833.7,509.0 834.9,493.8 836.2,514.9 837.1,517.0 838.2,508.5 839.5,527.5 840.7,516.9 841.7,521.0 842.9,492.5 843.8,482.8 844.9,493.1 845.8,488.9 846.7,490.6 847.9,505.3 849.1,493.2 850.0,480.9 851.1,487.7 852.2,504.2 853.4,512.5 854.4,496.1 855.2,511.5 856.2,520.3 857.1,519.7 858.1,556.8 859.3,506.0 860.4,504.5 861.7,525.8 862.9,545.7 863.8,507.5 864.6,484.4 865.9,492.4 866.7,493.2 868.0,496.2 869.1,485.2 870.1,478.6 870.9,534.4 871.8,505.6 872.7,526.7 873.5,496.9 874.7,507.9 875.9,478.7 877.0,493.5 877.9,518.0 878.8,518.7 879.7,518.8 882.0,520.0 884.0,540.0 886.0,510.0 888.0,505.0 890.0,515.0 892.0,500.0 894.0,470.0 896.0,450.0 898.0,430.0 899.0,470.0 900.5,425.0 901.5,450.0 903.0,440.0 904.0,470.0 905.0,420.0 906.0,400.0 907.7,390.6 908.5,440.0 909.2,610.0 910.0,450.0 910.8,400.0 911.5,500.0 912.2,420.0 912.8,352.8 913.6,372.0 914.3,395.0 915.0,540.0 915.6,640.0 916.2,450.0 916.8,420.0 917.5,520.0 918.2,470.0 919.0,440.0 919.8,400.0 920.5,470.0 921.3,530.0 922.0,430.0 923.0,393.0 923.8,405.0 924.5,500.0 925.0,580.0 925.6,470.0 926.2,620.0 926.8,700.0 927.4,650.0 928.0,705.0 929.0,715.0 930.0,679.0 931.2,716.3 933.1,676.6 934.9,715.3 936.3,693.6 937.6,688.4 938.8,693.5 940.6,685.7 941.9,716.8 943.0,715.4 944.7,694.7 946.0,718.2 948.0,698.6 949.7,698.4 951.5,685.3 952.7,694.6 954.3,716.8 955.9,698.0 957.5,679.8 959.3,716.0 960.6,700.8 963.0,720.3 1076.0,720.3 1077.5,690.0 1078.3,640.0 1079.0,580.5 1079.8,650.0 1080.6,620.0 1081.5,680.0 1082.5,660.0 1083.5,700.0 1085.0,720.3 1089.3,720.3 1090.0,700.0 1090.7,720.3 1091.3,720.3 1092.0,680.0 1092.7,720.3 1093.0,720.3 1093.7,645.0 1094.4,720.3 1094.8,720.3 1095.5,690.0 1096.2,720.3 1096.3,720.3 1097.0,665.0 1097.7,720.3 1098.2,720.3 1098.9,650.5 1099.6,720.3 1099.8,720.3 1100.5,685.0 1101.2,720.3 1101.3,720.3 1102.0,670.0 1102.7,720.3 1103.1,720.3 1103.8,690.0 1104.5,720.3 1104.8,720.3 1105.5,669.0 1106.2,720.3 1106.8,720.3 1107.5,680.0 1108.2,720.3 1108.8,720.3 1109.5,700.0 1110.2,720.3 1111.3,720.3 1112.0,690.0 1112.7,720.3 1113.3,720.3 1114.0,600.8 1114.7,720.3 1115.3,720.3 1116.0,680.0 1116.7,720.3 1117.3,720.3 1118.0,640.0 1118.7,720.3 1118.5,720.3 1119.2,560.0 1119.9,720.3 1119.6,720.3 1120.3,521.6 1121.0,720.3 1120.7,720.3 1121.4,560.0 1122.1,720.3 1121.9,720.3 1122.6,640.0 1123.3,720.3 1123.3,720.3 1124.0,700.0 1124.7,720.3 1126.0,720.3 1148.0,720.3 1149.0,720.3 1149.7,705.0 1150.4,720.3 1150.9,720.3 1151.6,691.0 1152.3,720.3 1152.8,720.3 1153.5,710.0 1154.2,720.3 1155.0,720.3 1155.7,705.0 1156.4,720.3 1157.2,720.3 1157.9,694.8 1158.6,720.3 1159.3,720.3 1160.0,708.0 1160.7,720.3 1161.8,720.3 1162.5,700.0 1163.2,720.3 1163.8,720.3 1164.5,680.0 1165.2,720.3 1165.3,720.3 1166.0,650.0 1166.7,720.3 1166.3,720.3 1167.0,635.8 1167.7,720.3 1167.6,720.3 1168.3,660.0 1169.0,720.3 1168.9,720.3 1169.6,690.0 1170.3,720.3 1170.1,720.3 1170.8,640.0 1171.5,720.3 1171.5,720.3 1172.2,608.0 1172.9,720.3 1172.7,720.3 1173.4,640.0 1174.1,720.3 1173.9,720.3 1174.6,690.0 1175.3,720.3 1176.5,720.3 1188.0,720.3 1188.6,720.3 1189.3,690.0 1190.0,720.3 1189.6,720.3 1190.3,632.0 1191.0,720.3 1190.6,720.3 1191.3,690.0 1192.0,720.3 1193.0,720.3 1201.0,720.3 1202.1,720.3 1202.8,690.0 1203.5,720.3 1203.2,720.3 1203.9,646.0 1204.6,720.3 1204.3,720.3 1205.0,690.0 1205.7,720.3 1210.9,720.3 1211.6,680.0 1212.3,720.3 1212.1,720.3 1212.8,617.4 1213.5,720.3 1213.3,720.3 1214.0,670.0 1214.7,720.3 1216.0,720.3 1226.4,720.3" fill="none" stroke="#0000ff" stroke-width="1.05" stroke-linejoin="round"/>
</g>
<text x="795.8" y="97.8" text-anchor="middle" font-family="Liberation Sans, Arial, sans-serif" font-size="37.9" font-weight="bold" fill="#fff">Value Graph</text>
<text x="827" y="906.3" text-anchor="middle" font-family="Liberation Sans, Arial, sans-serif" font-size="32.15" font-weight="bold" fill="#fff">Line Number (10^3)</text>
<text transform="translate(51.5,521.6) rotate(-90)" text-anchor="middle" font-family="Liberation Sans, Arial, sans-serif" font-size="33.2" font-weight="bold" fill="#ff0000">Output</text>
<rect x="167.5" y="131.5" width="813" height="98" fill="#858483" stroke="#000" stroke-width="1"/>
<line x1="176" y1="146.9" x2="242.4" y2="146.9" stroke="#ff0000" stroke-width="1.4"/>
<text x="260.5" y="155.9" font-family="Liberation Sans, Arial, sans-serif" font-size="28.8" fill="#fff">FTN1.PkAvg (Hz) (Min: 80 Max: 270.93 Mean: 165.06)</text>
<line x1="176" y1="179.4" x2="242.4" y2="179.4" stroke="#008000" stroke-width="1.4"/>
<text x="260.5" y="188.4" font-family="Liberation Sans, Arial, sans-serif" font-size="28.8" fill="#fff">FTN1.SnX R (Min: -1.17 Max: 39.73 Mean: 16.1)</text>
<line x1="176" y1="211.9" x2="242.4" y2="211.9" stroke="#0000ff" stroke-width="1.4"/>
<text x="260.5" y="220.9" font-family="Liberation Sans, Arial, sans-serif" font-size="28.8" fill="#fff">FTN1.SnY R (Min: -1.55 Max: 46.39 Mean: 16.76)</text>
<text transform="translate(167.8,854.3) scale(.97,1.05)" text-anchor="middle" font-family="Liberation Sans, Arial, sans-serif" font-size="32" fill="#fff">0</text>
<text transform="translate(431.5,854.3) scale(.97,1.05)" text-anchor="middle" font-family="Liberation Sans, Arial, sans-serif" font-size="32" fill="#fff">50</text>
<text transform="translate(695.2,854.3) scale(.97,1.05)" text-anchor="middle" font-family="Liberation Sans, Arial, sans-serif" font-size="32" fill="#fff">100</text>
<text transform="translate(959.0,854.3) scale(.97,1.05)" text-anchor="middle" font-family="Liberation Sans, Arial, sans-serif" font-size="32" fill="#fff">150</text>
<text transform="translate(1222.7,854.3) scale(.97,1.05)" text-anchor="middle" font-family="Liberation Sans, Arial, sans-serif" font-size="32" fill="#fff">200</text>
<text transform="translate(1486.4,854.3) scale(.97,1.05)" text-anchor="middle" font-family="Liberation Sans, Arial, sans-serif" font-size="32" fill="#fff">250</text>
<text transform="translate(136.2,807.9) scale(.97,1.05)" text-anchor="end" font-family="Liberation Sans, Arial, sans-serif" font-size="32" fill="#ff0000">50</text>
<text transform="translate(136.2,697.1) scale(.97,1.05)" text-anchor="end" font-family="Liberation Sans, Arial, sans-serif" font-size="32" fill="#ff0000">100</text>
<text transform="translate(136.2,586.3) scale(.97,1.05)" text-anchor="end" font-family="Liberation Sans, Arial, sans-serif" font-size="32" fill="#ff0000">150</text>
<text transform="translate(136.2,475.6) scale(.97,1.05)" text-anchor="end" font-family="Liberation Sans, Arial, sans-serif" font-size="32" fill="#ff0000">200</text>
<text transform="translate(136.2,364.8) scale(.97,1.05)" text-anchor="end" font-family="Liberation Sans, Arial, sans-serif" font-size="32" fill="#ff0000">250</text>
<text transform="translate(136.2,254.0) scale(.97,1.05)" text-anchor="end" font-family="Liberation Sans, Arial, sans-serif" font-size="32" fill="#ff0000">300</text>
<text transform="translate(1539,807.9) scale(.97,1.05)" text-anchor="middle" font-family="Liberation Sans, Arial, sans-serif" font-size="32" fill="#fff">-10</text>
<text transform="translate(1539,728.8) scale(.97,1.05)" text-anchor="middle" font-family="Liberation Sans, Arial, sans-serif" font-size="32" fill="#fff">0</text>
<text transform="translate(1539,649.6) scale(.97,1.05)" text-anchor="middle" font-family="Liberation Sans, Arial, sans-serif" font-size="32" fill="#fff">10</text>
<text transform="translate(1539,570.5) scale(.97,1.05)" text-anchor="middle" font-family="Liberation Sans, Arial, sans-serif" font-size="32" fill="#fff">20</text>
<text transform="translate(1539,491.4) scale(.97,1.05)" text-anchor="middle" font-family="Liberation Sans, Arial, sans-serif" font-size="32" fill="#fff">30</text>
<text transform="translate(1539,412.3) scale(.97,1.05)" text-anchor="middle" font-family="Liberation Sans, Arial, sans-serif" font-size="32" fill="#fff">40</text>
<text transform="translate(1539,333.1) scale(.97,1.05)" text-anchor="middle" font-family="Liberation Sans, Arial, sans-serif" font-size="32" fill="#fff">50</text>
<text transform="translate(1539,254.0) scale(.97,1.05)" text-anchor="middle" font-family="Liberation Sans, Arial, sans-serif" font-size="32" fill="#fff">60</text>
<rect x="1087" y="246.5" width="79" height="34.5" fill="#fff" stroke="#000" stroke-width="1"/>
<text x="1125.9" y="271.6" text-anchor="middle" font-family="Liberation Sans, Arial, sans-serif" font-size="27.9" fill="#000">1 min</text>
<rect x="1184" y="246.5" width="81" height="34.5" fill="#fff" stroke="#000" stroke-width="1"/>
<text x="1222.7" y="271.6" text-anchor="middle" font-family="Liberation Sans, Arial, sans-serif" font-size="27.9" fill="#000">2 min</text>
</svg>
<div class="abs btn" style="left:5.2px;width:87.8px"><span class="ui" style="left:10.6px;transform:scaleX(.885)">Graph Left</span></div>
<div class="abs btn" style="left:101.2px;width:89.0px"><span class="ui" style="left:7.7px;transform:scaleX(.885)">Graph Right</span></div>
<div class="abs btn" style="left:198.6px;width:93.0px"><span class="ui" style="left:8.6px;transform:scaleX(.885)">Clear Graph</span></div>
<div class="abs btn" style="left:300.3px;width:92.5px"><span class="ui" style="left:12.3px;transform:scaleX(.885)">Load A Log</span></div>
<div class="abs cb" style="left:503.4px;top:957.8px"></div><div class="abs ui lbl" style="left:523.6px;top:955.8px">Show Map</div>
<div class="abs cb" style="left:607.2px;top:957.8px"></div><div class="abs ui lbl" style="left:627.4px;top:955.8px">Use Time</div>
<div class="abs cb" style="left:703.3px;top:957.8px"></div><div class="abs ui lbl" style="left:723.5px;top:955.8px">Data Table</div>
<div class="abs cb" style="left:986px;top:957.8px"></div><div class="abs ui lbl" style="left:1006.2px;top:955.8px">Mode</div>
<div class="abs cb" style="left:1059.6px;top:957.8px"></div><div class="abs ui lbl" style="left:1079.8px;top:955.8px">Errors</div>
<div class="abs cb" style="left:1133.2px;top:957.8px"></div><div class="abs ui lbl" style="left:1153.4px;top:955.8px">MSG</div>
<div class="abs cb" style="left:1203.3px;top:957.8px"></div><div class="abs ui lbl" style="left:1223.5px;top:955.8px">Events</div>
<div class="abs" style="left:852px;top:952.5px;width:125px;height:30px;background:#f0f0f0;box-shadow:inset 1px 1px 0 #fff"></div>
<div class="abs" style="left:854px;top:954.5px;width:101px;height:30px;background:#434445"></div>
<div class="abs ui lbl" style="left:855.5px;top:955.9px">a/None</div>
<svg class="abs" style="left:960px;top:961px" width="13" height="8"><path d="M3 2.5h7l-3.5 4z" fill="#000"/></svg>
<div class="abs" id="tree"></div>
<svg class="abs" style="left:1598px;top:40px" width="170" height="934" viewBox="1598 40 170 934"><g stroke="#e0e0e0" stroke-width="1.6" stroke-dasharray="1.3 1.2" fill="none">
<path d="M1615.5 58V974"/><path d="M1639.5 321V552"/>
<path d="M1640 332.5H1650.5"/>
<path d="M1640 352.5H1650.5"/>
<path d="M1640 372.5H1650.5"/>
<path d="M1640 392.5H1650.5"/>
<path d="M1640 412.5H1650.5"/>
<path d="M1640 432.5H1650.5"/>
<path d="M1640 452.5H1650.5"/>
<path d="M1640 472.5H1650.5"/>
<path d="M1640 492.5H1650.5"/>
<path d="M1640 512.5H1650.5"/>
<path d="M1640 532.5H1650.5"/>
<path d="M1640 552.5H1650.5"/>
</g></svg>
<div class="pm" style="top:46px;height:12px"><i></i><b></b></div>
<div class="abs ui tl" style="left:1644px;top:44.3px;">AHR2</div>
<div class="pm" style="top:66px;height:12px"><i></i><b></b></div>
<div class="abs ui tl" style="left:1644px;top:64.3px;">ARM</div>
<div class="pm" style="top:86px;height:12px"><i></i><b></b></div>
<div class="abs ui tl" style="left:1644px;top:84.3px;">ATT</div>
<div class="pm" style="top:106px;height:12px"><i></i><b></b></div>
<div class="abs ui tl" style="left:1644px;top:104.3px;">BARO</div>
<div class="pm" style="top:126px;height:12px"><i></i><b></b></div>
<div class="abs ui tl" style="left:1644px;top:124.3px;">BAT</div>
<div class="pm" style="top:146px;height:12px"><i></i><b></b></div>
<div class="abs ui tl" style="left:1644px;top:144.3px;">CTRL</div>
<div class="pm" style="top:166px;height:12px"><i></i><b></b></div>
<div class="abs ui tl" style="left:1644px;top:164.3px;">CTUN</div>
<div class="pm" style="top:186px;height:12px"><i></i><b></b></div>
<div class="abs ui tl" style="left:1644px;top:184.3px;">D32</div>
<div class="pm" style="top:206px;height:12px"><i></i><b></b></div>
<div class="abs ui tl" style="left:1644px;top:204.3px;">DU32</div>
<div class="pm" style="top:226px;height:12px"><i></i><b></b></div>
<div class="abs ui tl" style="left:1644px;top:224.3px;">ESC</div>
<div class="pm" style="top:246px;height:12px"><i></i><b></b></div>
<div class="abs ui tl" style="left:1644px;top:244.3px;">EV</div>
<div class="pm" style="top:266px;height:12px"><i></i><b></b></div>
<div class="abs ui tl" style="left:1644px;top:264.3px;">FMT</div>
<div class="pm" style="top:286px;height:12px"><i></i><b></b></div>
<div class="abs ui tl" style="left:1644px;top:284.3px;">FMTU</div>
<div class="pm" style="top:306px;height:12px"><i></i></div>
<div class="abs ui tl" style="left:1644px;top:304.3px;">FTN1</div>
<div class="abs cb" style="left:1652px;top:324px"></div>
<div class="abs ui tl" style="left:1668.3px;top:324.3px">TimeUS</div>
<div class="abs cb" style="left:1652px;top:344px"></div>
<svg class="abs" style="left:1652px;top:344px" width="14" height="14"><path d="M1.5 7.5L5 10.6L12.6 3.5" stroke="#404040" stroke-width="1.4" fill="none"/></svg>
<div class="abs ui tl" style="left:1668.3px;top:344.3px">PkAvg</div>
<div class="abs cb" style="left:1652px;top:364px"></div>
<div class="abs ui tl" style="left:1668.3px;top:364.3px">BwAvg</div>
<div class="abs cb" style="left:1652px;top:384px"></div>
<div class="abs ui tl" style="left:1668.3px;top:384.3px">DnF</div>
<div class="abs cb" style="left:1652px;top:404px"></div>
<svg class="abs" style="left:1652px;top:404px" width="14" height="14"><path d="M1.5 7.5L5 10.6L12.6 3.5" stroke="#404040" stroke-width="1.4" fill="none"/></svg>
<div class="abs ui tl" style="left:1668.3px;top:404.3px">SnX</div>
<div class="abs cb" style="left:1652px;top:424px"></div>
<svg class="abs" style="left:1652px;top:424px" width="14" height="14"><path d="M1.5 7.5L5 10.6L12.6 3.5" stroke="#404040" stroke-width="1.4" fill="none"/></svg>
<div class="abs ui tl" style="left:1668.3px;top:424.3px">SnY</div>
<div class="abs cb" style="left:1652px;top:444px"></div>
<div class="abs ui tl" style="left:1668.3px;top:444.3px">SnZ</div>
<div class="abs cb" style="left:1652px;top:464px"></div>
<div class="abs ui tl" style="left:1668.3px;top:464.3px">RtX</div>
<div class="abs cb" style="left:1652px;top:484px"></div>
<div class="abs ui tl" style="left:1668.3px;top:484.3px">RtY</div>
<div class="abs cb" style="left:1652px;top:504px"></div>
<div class="abs ui tl" style="left:1668.3px;top:504.3px">RtZ</div>
<div class="abs cb" style="left:1652px;top:524px"></div>
<div class="abs ui tl" style="left:1668.3px;top:524.3px">FH</div>
<div class="abs cb" style="left:1652px;top:544px"></div>
<div class="abs ui tl" style="left:1668.3px;top:544.3px">Tc</div>
<div class="pm" style="top:566px;height:12px"><i></i><b></b></div>
<div class="abs ui tl" style="left:1644px;top:564.3px;">FTN2</div>
<div class="pm" style="top:586px;height:12px"><i></i><b></b></div>
<div class="abs ui tl" style="left:1644px;top:584.3px;">GPA</div>
<div class="pm" style="top:606px;height:12px"><i></i><b></b></div>
<div class="abs ui tl" style="left:1644px;top:604.3px;">GPS</div>
<div class="pm" style="top:626px;height:12px"><i></i><b></b></div>
<div class="abs ui tl" style="left:1644px;top:624.3px;">IMU</div>
<div class="pm" style="top:646px;height:12px"><i></i><b></b></div>
<div class="abs ui tl" style="left:1644px;top:644.3px;">MAG</div>
<div class="pm" style="top:666px;height:12px"><i></i><b></b></div>
<div class="abs ui tl" style="left:1644px;top:664.3px;">MODE</div>
<div class="pm" style="top:686px;height:12px"><i></i><b></b></div>
<div class="abs ui tl" style="left:1644px;top:684.3px;">MOTB</div>
<div class="pm" style="top:706px;height:12px"><i></i><b></b></div>
<div class="abs ui tl" style="left:1644px;top:704.3px;">MSG</div>
<div class="pm" style="top:726px;height:12px"><i></i><b></b></div>
<div class="abs ui tl" style="left:1644px;top:724.3px;">MULT</div>
<div class="pm" style="top:746px;height:12px"><i></i><b></b></div>
<div class="abs ui tl" style="left:1644px;top:744.3px;">NKF1</div>
<div class="pm" style="top:766px;height:12px"><i></i><b></b></div>
<div class="abs ui tl" style="left:1644px;top:764.3px;">NKF2</div>
<div class="pm" style="top:786px;height:12px"><i></i><b></b></div>
<div class="abs ui tl" style="left:1644px;top:784.3px;">NKF3</div>
<div class="pm" style="top:806px;height:12px"><i></i><b></b></div>
<div class="abs ui tl" style="left:1644px;top:804.3px;">NKF4</div>
<div class="pm" style="top:826px;height:12px"><i></i><b></b></div>
<div class="abs ui tl" style="left:1644px;top:824.3px;">NKF5</div>
<div class="pm" style="top:846px;height:12px"><i></i><b></b></div>
<div class="abs ui tl" style="left:1644px;top:844.3px;">NKQ</div>
<div class="pm" style="top:866px;height:12px"><i></i><b></b></div>
<div class="abs ui tl" style="left:1644px;top:864.3px;">NKT</div>
<div class="pm" style="top:886px;height:12px"><i></i><b></b></div>
<div class="abs ui tl" style="left:1644px;top:884.3px;">PARM</div>
<div class="pm" style="top:906px;height:12px"><i></i><b></b></div>
<div class="abs ui tl" style="left:1644px;top:904.3px;">PIDA</div>
<div class="pm" style="top:926px;height:12px"><i></i><b></b></div>
<div class="abs ui tl" style="left:1644px;top:924.3px;">PIDP</div>
<div class="pm" style="top:946px;height:12px"><i></i><b></b></div>
<div class="abs ui tl" style="left:1644px;top:944.3px;">PIDR</div>
<div class="pm" style="top:966px;height:8px"><i></i><b></b></div>
<div class="abs ui tl" style="left:1644px;top:964.3px;height:11px;overflow:hidden">PIDY</div>
<div class="abs" style="left:1768px;top:41.7px;width:21.2px;height:932.8px;background:#f0f0f0"></div>
<div class="abs" style="left:1769.6px;top:63px;width:18.2px;height:705px;background:#cdcdcd"></div>
<svg class="abs" style="left:1768px;top:40px" width="22" height="935"><g stroke="#606060" stroke-width="2.2" fill="none"><path d="M6.6 15.6L10.8 11.4L15 15.6"/><path d="M6.6 921.6L10.8 925.8L15 921.6"/></g></svg>
<div class="abs" style="left:1597px;top:974.5px;width:194px;height:2.5px;background:#82889a"></div>
</body></html>
